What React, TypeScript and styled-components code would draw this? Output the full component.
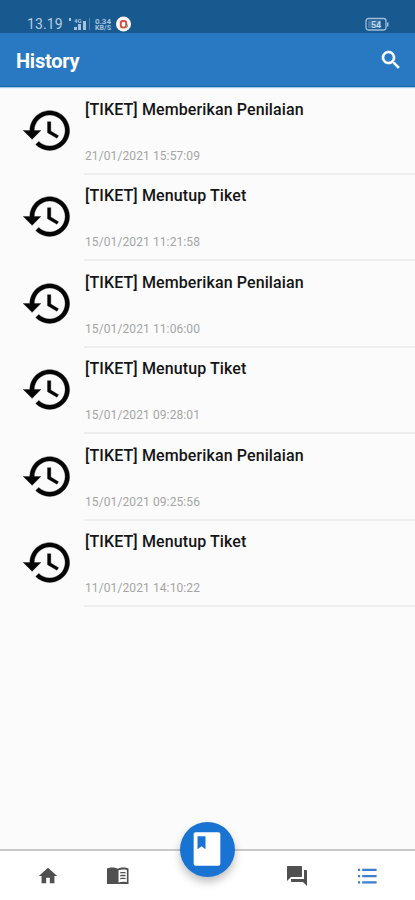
import React from "react";
import styled, { createGlobalStyle } from "styled-components";

const GlobalStyle = createGlobalStyle`
  * { box-sizing: border-box; }
  body { margin: 0; background: #fbfbfb; font-family: Roboto, sans-serif; }
`;

const Screen = styled.div`
  width: 415px;
  height: 900px;
  display: flex;
  flex-direction: column;
  background: #fbfbfb;
  overflow: hidden;
`;

const StatusBar = styled.div`
  height: 33px;
  flex: none;
  display: flex;
  align-items: flex-end;
  padding: 0 26px 1px 27px;
  background: #18598f;
  color: #b4cee4;
`;

const Clock = styled.span`
  width: 41px;
  font-size: 14px;
  line-height: 15px;
  letter-spacing: 0.1px;
`;

const StatusGlyphs = styled.svg`
  display: block;
`;

const Spacer = styled.div`
  flex: 1;
`;

const Header = styled.header`
  height: 54px;
  flex: none;
  display: flex;
  align-items: center;
  justify-content: space-between;
  padding: 0 12px 0 16px;
  background: #2879c1;
  border-bottom: 1px solid #1268ab;
  box-shadow: 0 1px 1px #a9cce8;
  color: #fff;
`;

const Title = styled.h1`
  margin: 3px 0 0;
  font-size: 20px;
  font-weight: 700;
  line-height: 24px;
  letter-spacing: -0.25px;
`;

const Icon = styled.svg<{ $size: number; $weight: number }>`
  display: block;
  flex: none;
  width: ${(p) => p.$size}px;
  height: ${(p) => p.$size}px;
  fill: currentColor;
  stroke: ${(p) => (p.$weight ? "currentColor" : "none")};
  stroke-width: ${(p) => p.$weight};
`;

const List = styled.main`
  flex: 1;
  padding-top: 1px;
`;

const Row = styled.article`
  height: 86.5px;
  display: flex;
  padding-left: 21px;
`;

const IconCell = styled.div`
  width: 63px;
  padding-top: 15.5px;
  color: #050505;
`;

const RowBody = styled.div`
  flex: 1;
  display: flex;
  flex-direction: column;
  justify-content: space-between;
  padding: 11.5px 0 10px 1px;
  border-bottom: 2px solid #eeeeee;
`;

const RowTitle = styled.div`
  font-size: 16px;
  font-weight: 500;
  line-height: 20px;
  letter-spacing: 0.11px;
  color: #151515;
  white-space: nowrap;
`;

const RowDate = styled.time`
  font-size: 12px;
  line-height: 14px;
  letter-spacing: 0.1px;
  color: #a5a5a5;
`;

const BottomBar = styled.nav`
  position: relative;
  height: 51px;
  flex: none;
  display: flex;
  align-items: center;
  justify-content: space-between;
  padding: 1px 36px 0;
  background: #fff;
  border-top: 2px solid #c9c9c9;
`;

const NavGroup = styled.div`
  display: flex;
  gap: 46px;
`;

const NavItem = styled.a<{ $active?: boolean }>`
  width: 24px;
  height: 24px;
  display: grid;
  place-items: center;
  color: ${(p) => (p.$active ? "#3f7dce" : "#505050")};
`;

const Fab = styled.button`
  position: absolute;
  left: 180px;
  top: -29px;
  width: 55px;
  height: 55px;
  display: grid;
  place-items: center;
  padding: 0 1px 2px 0;
  border: 0;
  border-radius: 50%;
  background: #1873d3;
  color: #fff;
  box-shadow: 0 5px 8px rgba(0, 0, 0, 0.25);
`;

const entries = [
  { title: "[TIKET] Memberikan Penilaian", date: "21/01/2021 15:57:09" },
  { title: "[TIKET] Menutup Tiket", date: "15/01/2021 11:21:58" },
  { title: "[TIKET] Memberikan Penilaian", date: "15/01/2021 11:06:00" },
  { title: "[TIKET] Menutup Tiket", date: "15/01/2021 09:28:01" },
  { title: "[TIKET] Memberikan Penilaian", date: "15/01/2021 09:25:56" },
  { title: "[TIKET] Menutup Tiket", date: "11/01/2021 14:10:22" },
];

const paths = {
  search:
    "M15.5 14h-.79l-.28-.27C15.41 12.59 16 11.11 16 9.5 16 5.91 13.09 3 9.5 3S3 5.91 3 9.5 5.91 16 9.5 16c1.61 0 3.09-.59 4.23-1.57l.27.28v.79l5 4.99L20.49 19l-4.99-5zm-6 0C7.01 14 5 11.99 5 9.5S7.01 5 9.5 5 14 7.01 14 9.5 11.99 14 9.5 14z",
  history:
    "M13 3c-4.97 0-9 4.03-9 9H1l3.89 3.89.07.14L9 12H6c0-3.87 3.13-7 7-7s7 3.13 7 7-3.13 7-7 7c-1.93 0-3.68-.79-4.94-2.06l-1.42 1.42C8.27 19.99 10.51 21 13 21c4.97 0 9-4.03 9-9s-4.03-9-9-9zm-1 5v5l4.28 2.54.72-1.21-3.5-2.08V8H12z",
  home: "M10 20v-6h4v6h5v-8h3L12 3 2 12h3v8z",
  reader:
    "M2.5 4C5.5 3.3 9.5 3.3 12 4.8 14.5 3.3 18.5 3.3 21.5 4L23 4.5V20.5H1V4.5zM21.3 6C18.5 5.2 15 5.5 12.8 6.5V19C15 18.1 18.5 18 21.3 18.7zM14.5 8.5C16 8 18 8 20 8.3V9.6C18 9.3 16 9.3 14.5 9.8zM14.5 11.5C16 11 18 11 20 11.3V12.6C18 12.3 16 12.3 14.5 12.8zM14.5 14.5C16 14 18 14 20 14.3V15.6C18 15.3 16 15.3 14.5 15.8z",
  forum:
    "M21 6h-2v9H6v2c0 .55.45 1 1 1h11l4 4V7c0-.55-.45-1-1-1zm-4 6V3c0-.55-.45-1-1-1H3c-.55 0-1 .45-1 1v14l4-4h10c.55 0 1-.45 1-1z",
  list: "M2 4h2.3v2.3H2zM6.500 4h15v2.3h-15zM2 10.5h2.3v2.3H2zM6.500 10.5h15v2.3h-15zM2 17h2.3v2.3H2zM6.500 17h15v2.3h-15z",
  book: "M18.8 2H5.2C4.5 2 4 2.5 4 3.2v17.6c0 .7.5 1.2 1.2 1.2h13.6c.7 0 1.2-.5 1.2-1.2V3.2c0-.7-.5-1.2-1.2-1.2zM6.3 4.400h4.800v7.800l-2.400-1.800-2.400 1.800z",
};

type GlyphProps = { name: keyof typeof paths; size: number; weight?: number };

function Glyph({ name, size, weight = 0 }: GlyphProps) {
  return (
    <Icon $size={size} $weight={weight} viewBox="0 0 24 24" aria-hidden="true">
      <path d={paths[name]} fillRule="evenodd" />
    </Icon>
  );
}

function Status() {
  return (
    <StatusBar>
      <Clock>13.19</Clock>
      <StatusGlyphs width="64" height="16" viewBox="0 0 64 16" fill="#a5c3dd">
        <path d="M1 2h2v3H1zM6 11h3v3H6zM10 8h3v6h-3zM15 5h3v9h-3z" />
        <path d="M21 2h1v12h-1z" opacity=".4" />
        <text x="6" y="7" fontSize="6" fontWeight="700">4G</text>
        <text x="27" y="7.5" fontSize="7.5" fontWeight="700" textLength="16" lengthAdjust="spacingAndGlyphs">0.34</text>
        <text x="27" y="14" fontSize="7" fontWeight="700" textLength="16" lengthAdjust="spacingAndGlyphs">KB/S</text>
        <circle cx="55.5" cy="8" r="7.5" fill="#fff" />
        <rect x="52.8" y="5" width="5.4" height="6.5" rx="2" fill="none" stroke="#d44f4b" strokeWidth="2" />
        <path d="M58 10l2-2v3l-2 1z" fill="#7caf6e" />
      </StatusGlyphs>
      <Spacer />
      <StatusGlyphs width="24" height="15" viewBox="0 0 24 15">
        <rect x="1" y="1.5" width="20" height="11.5" rx="2.5" fill="none" stroke="#9fbfdb" strokeWidth="1.3" />
        <path d="M22 5.5h1.5v4H22z" fill="#9fbfdb" />
        <rect x="3" y="3.5" width="13" height="7.5" rx="1" fill="#7da5c8" opacity=".45" />
        <text x="6" y="10.5" fontSize="9" fontWeight="500" fill="#c7dbeb">54</text>
      </StatusGlyphs>
    </StatusBar>
  );
}

export default function App() {
  return (
    <>
      <GlobalStyle />
      <Screen>
        <Status />
        <Header>
          <Title>History</Title>
          <Glyph name="search" size={24} weight={0.6} />
        </Header>
        <List>
          {entries.map((entry) => (
            <Row key={entry.date}>
              <IconCell>
                <Glyph name="history" size={53} weight={0.15} />
              </IconCell>
              <RowBody>
                <RowTitle>{entry.title}</RowTitle>
                <RowDate>{entry.date}</RowDate>
              </RowBody>
            </Row>
          ))}
        </List>
        <BottomBar>
          <NavGroup>
            <NavItem><Glyph name="home" size={22} /></NavItem>
            <NavItem><Glyph name="reader" size={23.5} /></NavItem>
          </NavGroup>
          <NavGroup>
            <NavItem><Glyph name="forum" size={24} /></NavItem>
            <NavItem $active><Glyph name="list" size={23} /></NavItem>
          </NavGroup>
          <Fab aria-label="Tiket"><Glyph name="book" size={40} /></Fab>
        </BottomBar>
      </Screen>
    </>
  );
}
